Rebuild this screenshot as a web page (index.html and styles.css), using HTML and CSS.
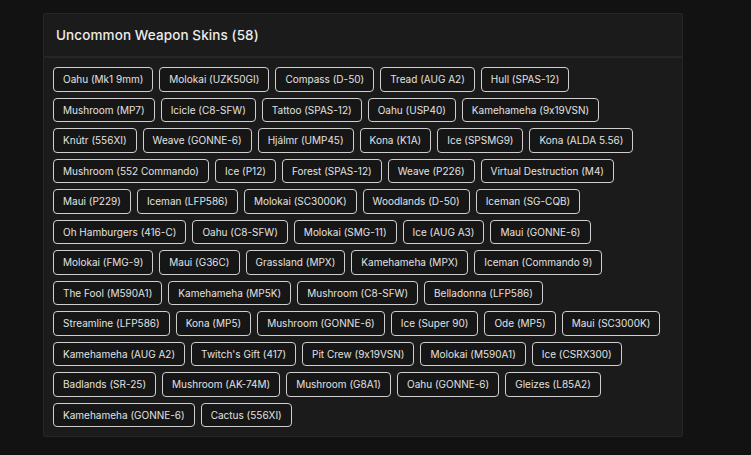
FILE: index.html
```html
<!DOCTYPE html>
<html lang="en">
<head>
<meta charset="utf-8">
<title>Uncommon Weapon Skins</title>
<link rel="stylesheet" href="styles.css">
</head>
<body>
<section class="panel">
  <header class="panel-head">
    <h2 class="panel-title">Uncommon Weapon Skins (58)</h2>
  </header>
  <ul class="skin-list">
    <li class="skin">Oahu (Mk1 9mm)</li>
    <li class="skin">Molokai (UZK50GI)</li>
    <li class="skin">Compass (D-50)</li>
    <li class="skin">Tread (AUG A2)</li>
    <li class="skin">Hull (SPAS-12)</li>
    <li class="skin">Mushroom (MP7)</li>
    <li class="skin">Icicle (C8-SFW)</li>
    <li class="skin">Tattoo (SPAS-12)</li>
    <li class="skin">Oahu (USP40)</li>
    <li class="skin">Kamehameha (9x19VSN)</li>
    <li class="skin">Knútr (556XI)</li>
    <li class="skin">Weave (GONNE-6)</li>
    <li class="skin">Hjálmr (UMP45)</li>
    <li class="skin">Kona (K1A)</li>
    <li class="skin">Ice (SPSMG9)</li>
    <li class="skin">Kona (ALDA 5.56)</li>
    <li class="skin">Mushroom (552 Commando)</li>
    <li class="skin">Ice (P12)</li>
    <li class="skin">Forest (SPAS-12)</li>
    <li class="skin">Weave (P226)</li>
    <li class="skin">Virtual Destruction (M4)</li>
    <li class="skin">Maui (P229)</li>
    <li class="skin">Iceman (LFP586)</li>
    <li class="skin">Molokai (SC3000K)</li>
    <li class="skin">Woodlands (D-50)</li>
    <li class="skin">Iceman (SG-CQB)</li>
    <li class="skin">Oh Hamburgers (416-C)</li>
    <li class="skin">Oahu (C8-SFW)</li>
    <li class="skin">Molokai (SMG-11)</li>
    <li class="skin">Ice (AUG A3)</li>
    <li class="skin">Maui (GONNE-6)</li>
    <li class="skin">Molokai (FMG-9)</li>
    <li class="skin">Maui (G36C)</li>
    <li class="skin">Grassland (MPX)</li>
    <li class="skin">Kamehameha (MPX)</li>
    <li class="skin">Iceman (Commando 9)</li>
    <li class="skin">The Fool (M590A1)</li>
    <li class="skin">Kamehameha (MP5K)</li>
    <li class="skin">Mushroom (C8-SFW)</li>
    <li class="skin">Belladonna (LFP586)</li>
    <li class="skin">Streamline (LFP586)</li>
    <li class="skin">Kona (MP5)</li>
    <li class="skin">Mushroom (GONNE-6)</li>
    <li class="skin">Ice (Super 90)</li>
    <li class="skin">Ode (MP5)</li>
    <li class="skin">Maui (SC3000K)</li>
    <li class="skin">Kamehameha (AUG A2)</li>
    <li class="skin">Twitch's Gift (417)</li>
    <li class="skin">Pit Crew (9x19VSN)</li>
    <li class="skin">Molokai (M590A1)</li>
    <li class="skin">Ice (CSRX300)</li>
    <li class="skin">Badlands (SR-25)</li>
    <li class="skin">Mushroom (AK-74M)</li>
    <li class="skin">Mushroom (G8A1)</li>
    <li class="skin">Oahu (GONNE-6)</li>
    <li class="skin">Gleizes (L85A2)</li>
    <li class="skin">Kamehameha (GONNE-6)</li>
    <li class="skin">Cactus (556XI)</li>
  </ul>
</section>
</body>
</html>
```
FILE: styles.css
```css
html, body {
  margin: 0;
  background: #121212;
}

body {
  padding: 13px 0 0 43px;
  font-family: Inter, "Noto Sans", sans-serif;
  font-feature-settings: "calt" 0;
  color: #e4e4e4;
}

.panel {
  box-sizing: border-box;
  width: 640px;
  background: #1b1b1b;
  border: 1px solid #262626;
  border-radius: 2px;
}

.panel-head {
  height: 42px;
  display: flex;
  align-items: center;
  padding: 0 12px;
  border-bottom: 2px solid #262626;
}

.panel-title {
  margin: 0;
  font-size: 13.5px;
  font-weight: 500;
  letter-spacing: 0.1px;
  color: #ececec;
}

.skin-list {
  list-style: none;
  margin: 0;
  padding: 9px 17px 9px 9px;
  display: flex;
  flex-wrap: wrap;
  gap: 6px;
}

.skin {
  padding: 3px 9px;
  font-size: 10px;
  line-height: 16.5px;
  color: #e2e2e2;
  background: #161616;
  border: 1px solid #cfcfcf;
  border-radius: 4px;
  white-space: nowrap;
}
```
